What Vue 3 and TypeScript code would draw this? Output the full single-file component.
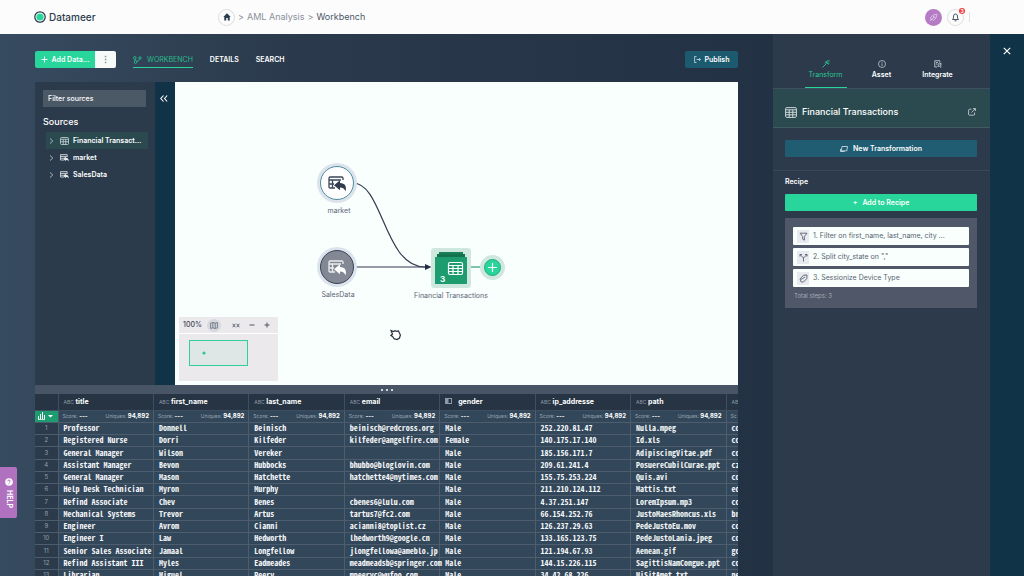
<script setup lang="ts">
import { ref } from 'vue'

interface Column { name: string; kind: 'text' | 'bool' }
interface Source { name: string; derived: boolean }
interface Step { label: string; icon: 'filter' | 'split' | 'tag' }

const filter = ref('')

const sources: Source[] = [
  { name: 'Financial Transact...', derived: true },
  { name: 'market', derived: false },
  { name: 'SalesData', derived: false },
]

const steps: Step[] = [
  { label: '1. Filter on first_name, last_name, city ...', icon: 'filter' },
  { label: '2. Split city_state on ","', icon: 'split' },
  { label: '3. Sessionize Device Type', icon: 'tag' },
]

const columns: Column[] = [
  { name: 'title', kind: 'text' },
  { name: 'first_name', kind: 'text' },
  { name: 'last_name', kind: 'text' },
  { name: 'email', kind: 'text' },
  { name: 'gender', kind: 'bool' },
  { name: 'ip_addresse', kind: 'text' },
  { name: 'path', kind: 'text' },
]

const rows: string[][] = [
  ['Professor', 'Donnell', 'Beinisch', 'beinisch@redcross.org', 'Male', '252.220.81.47', 'Nulla.mpeg', 'co'],
  ['Registered Nurse', 'Dorri', 'Kilfeder', 'kilfeder@angelfire.com', 'Female', '140.175.17.140', 'Id.xls', 'co'],
  ['General Manager', 'Wilson', 'Vereker', '', 'Male', '185.156.171.7', 'AdipiscingVitae.pdf', 'co'],
  ['Assistant Manager', 'Bevon', 'Hubbocks', 'bhubbo@bloglovin.com', 'Male', '209.61.241.4', 'PosuereCubilCurae.ppt', 'cz'],
  ['General Manager', 'Mason', 'Hatchette', 'hatchette4@nytimes.com', 'Male', '155.75.253.224', 'Quis.avi', 'co'],
  ['Help Desk Technician', 'Myron', 'Murphy', '', 'Male', '211.210.124.112', 'Mattis.txt', 'ed'],
  ['Refind Associate', 'Chev', 'Benes', 'cbenes6@lulu.com', 'Male', '4.37.251.147', 'LoremIpsum.mp3', 'co'],
  ['Mechanical Systems', 'Trevor', 'Artus', 'tartus7@fc2.com', 'Male', '66.154.252.76', 'JustoMaesRhoncus.xls', 'br'],
  ['Engineer', 'Avrom', 'Cianni', 'acianni8@toplist.cz', 'Male', '126.237.29.63', 'PedeJustoEu.mov', 'co'],
  ['Engineer I', 'Law', 'Hedworth', 'lhedworth9@google.cn', 'Male', '133.165.123.75', 'PedeJustoLania.jpeg', 'co'],
  ['Senior Sales Associate', 'Jamaal', 'Longfellow', 'jlongfellowa@ameblo.jp', 'Male', '121.194.67.93', 'Aenean.gif', 'go'],
  ['Refind Assistant III', 'Myles', 'Eadmeades', 'meadmeadsb@springer.com', 'Male', '144.15.226.115', 'SagittisNamCongue.ppt', 'co'],
  ['Librarian', 'Miguel', 'Peery', 'mpeeryc@wufoo.com', 'Male', '34.42.68.226', 'MiSitAmet.txt', 'ne'],
]
</script>

<template>
  <div class="app">
    <header class="top">
      <a class="brand" href="#">
        <svg width="12" height="12" viewBox="0 0 12 12"><circle cx="6" cy="6" r="5.2" fill="#fff" stroke="#2b3b4f" stroke-width="1.3" /><circle cx="6" cy="6" r="3.6" fill="#28d59b" /></svg>
        <span>Datameer</span>
      </a>
      <nav class="crumbs" aria-label="Breadcrumb">
        <a class="home" href="#" aria-label="Home">
          <svg width="8" height="8" viewBox="0 0 8 8"><path d="M4 0.3 0.3 4H1.3V7.6H3.2V5H4.8V7.6H6.7V4H7.7Z" fill="#2b3b4f" /></svg>
        </a>
        <span>&gt;</span><a href="#">AML Analysis</a><span>&gt;</span><a href="#" class="here">Workbench</a>
      </nav>
      <div class="account">
        <button class="avatar" aria-label="Account">
          <svg width="9" height="9" viewBox="0 0 9 9" fill="none" stroke="#e9d3ef" stroke-width="0.8"><path d="M2 6.8C.7 4.4 3 2 7.8 1.2 7.7 5 5.3 7.8 3.4 6.9M1.2 8l4-4.2M4 3l2.5 2" /></svg>
        </button>
        <button class="bell" aria-label="Notifications">
          <svg width="9" height="10" viewBox="0 0 9 10" fill="none" stroke="#3b4a5c" stroke-width="0.9"><path d="M1.500 7.500h6L6.500 6V4A2 2 0 0 0 2.500 4v2ZM3.500 8.800h2" /></svg>
          <span class="badge">3</span>
        </button>
        <i class="tick"></i>
      </div>
    </header>

    <div class="body">
      <main class="main">
        <div class="toolbar">
          <div class="split">
            <button class="add"><svg width="7" height="7" viewBox="0 0 7 7" stroke="#fff" stroke-width="0.9"><path d="M3.5.5v6M.5 3.5h6" /></svg>Add Data...</button>
            <button class="more" aria-label="More">⋮</button>
          </div>
          <nav class="tabs">
            <a href="#" class="on"><svg width="9" height="8" viewBox="0 0 9 8" fill="none" stroke="#29c693" stroke-width="0.8"><circle cx="1.8" cy="1.8" r="1.3" /><circle cx="2.5" cy="6" r="1.4" /><circle cx="7" cy="2" r="1.2" /><path d="M2 3v1.7M3.6 5.2C6 5 6 4 6.5 3" /></svg>WORKBENCH</a>
            <a href="#">DETAILS</a>
            <a href="#">SEARCH</a>
          </nav>
          <button class="publish"><svg width="7" height="7" viewBox="0 0 7 7" fill="none" stroke="#c9dde4" stroke-width="0.8"><path d="M2.5.5H.6v6h1.9M2.5 3.5h4M5 2l1.5 1.5L5 5" /></svg>Publish</button>
        </div>

        <section class="workspace">
          <aside class="sources">
            <input v-model="filter" type="text" placeholder="Filter sources" aria-label="Filter sources" />
            <h2>Sources</h2>
            <ul>
              <li v-for="s in sources" :key="s.name" :class="{ on: s.derived }">
                <button>
                  <svg width="5" height="6" viewBox="0 0 5 6" fill="none" stroke="#b4c0ca" stroke-width="0.9"><path d="M1 .5 3.8 3 1 5.5" /></svg>
                  <svg v-if="s.derived" width="9" height="8" viewBox="0 0 18 16" fill="none" stroke="#cdd6da" stroke-width="1.6"><rect x="1" y="1" width="16" height="14" rx="2" /><path d="M1 4.5h16M1 9.5h16M6.5 4.5V15M11.5 4.5V15" /></svg>
                  <svg v-else width="9" height="8" viewBox="0 0 20 17" fill="none" stroke="#e4e9ec" stroke-width="1.8"><path d="M9 13H1V1h15v5M1 5h15M1 9h7" /><path d="M7 10 13 5v3c4.500 0 7 3 6 8.500-1-2.500-3-3.500-6-3.500v2.500Z" fill="#e4e9ec" stroke="none" /></svg>
                  <span>{{ s.name }}</span>
                </button>
              </li>
            </ul>
          </aside>
          <div class="rail">
            <button aria-label="Collapse sources"><svg width="8" height="7" viewBox="0 0 8 7" fill="none" stroke="#fff" stroke-width="1.100"><path d="M3.500.5.8 3.500l2.700 3M7.200.5 4.500 3.500l2.700 3" /></svg></button>
          </div>
          <div class="canvas">
            <svg class="links" width="340" height="220" viewBox="0 0 340 220" fill="none" stroke="#33394f" stroke-width="1.200">
              <path d="M178 101C208 101 209 185 250 185H252" />
              <path d="M178 185h76" />
              <path d="M250 182l6.500 3-6.500 3Z" fill="#262c40" stroke="none" />
              <path d="M292 185h18" stroke="#2f9b77" />
            </svg>
            <div class="node market">
              <svg width="20" height="18" viewBox="0 0 20 18" fill="none" stroke="#3a4558" stroke-width="1.300"><path d="M8 14H3.200Q2 14 2 12.800V4.200Q2 3 3.200 3h11.600Q16 3 16 4.200V6M2 6h12M2 10h5M5.500 6v8" /><path d="M7 11.200 13 6.200v2.800c4.800.2 7 3 5.500 8.500-.9-2.700-2.500-4-5.500-4v2.700Z" fill="#303b4e" stroke="none" /></svg>
            </div>
            <span class="label l-market">market</span>
            <div class="node sales">
              <svg width="20" height="18" viewBox="0 0 20 18" fill="none" stroke="#eceef0" stroke-width="1.300"><path d="M8 14H3.200Q2 14 2 12.800V4.200Q2 3 3.200 3h11.600Q16 3 16 4.200V6M2 6h12M2 10h5M5.500 6v8" /><path d="M7 11.200 13 6.200v2.800c4.800.2 7 3 5.500 8.500-.9-2.700-2.500-4-5.500-4v2.700Z" fill="#fff" stroke="none" /></svg>
            </div>
            <span class="label l-sales">SalesData</span>
            <div class="stack">
              <svg width="32" height="32" viewBox="0 0 32 32"><path d="M4 0h24v3H4Z" fill="#168058" /><path d="M2 2h28v4H2Z" fill="#14734f" /><path d="M0 5h32v27H0Z" fill="#1c9c6f" /><g fill="none" stroke="#fff" stroke-width="1.200"><rect x="13.500" y="10.500" width="14" height="12" rx="1.500" /><path d="M13.500 13.500h14M13.500 16.500h14M13.500 19.500h14M18 13.500v9M23 13.500v9" /></g></svg>
              <b>3</b>
            </div>
            <span class="label l-fin">Financial Transactions</span>
            <button class="plus" aria-label="Add step"><svg width="11" height="11" viewBox="0 0 11 11" stroke="#fff" stroke-width="1.200"><path d="M5.500 1v9M1 5.500h9" /></svg></button>
            <svg class="cursor" width="12" height="12" viewBox="0 0 12 12" fill="#fff" stroke="#2a2f3e" stroke-width="1.200"><path d="M1 1.500 3.500 2.500 5 1.700l1.500.6 2-.3.900 2L10.400 6 9.500 9l-2.500 1.500-3-.8L2.600 7.500.9 6.500 2.500 5Z" /></svg>
            <div class="minimap">
              <div class="zoombar">
                <span>100%</span>
                <button class="map" aria-label="Toggle map"><svg width="8" height="7" viewBox="0 0 8 7" fill="none" stroke="#626b78" stroke-width="0.800"><path d="M.6 1.200 2.800.5 5.200 1.200 7.400.5v5.300l-2.200.7-2.400-.7-2.200.7ZM2.800.5v5.300M5.200 1.200v5.300" /></svg></button>
                <button aria-label="Fit"><svg width="8" height="5" viewBox="0 0 8 5" fill="none" stroke="#4d5665" stroke-width="0.900"><path d="M.7.8 2 2.500.7 4.200M3.300.8 2 2.500l1.300 1.700M4.700.8 6 2.500 4.700 4.200M7.300.8 6 2.500l1.300 1.700" /></svg></button>
                <button aria-label="Zoom out"><svg width="6" height="6" viewBox="0 0 6 6" stroke="#4d5665"><path d="M.5 3h5" /></svg></button>
                <button aria-label="Zoom in"><svg width="6" height="6" viewBox="0 0 6 6" stroke="#4d5665"><path d="M.5 3h5M3 .5v5" /></svg></button>
              </div>
              <div class="overview"><svg width="59" height="26" viewBox="0 0 59 26"><rect x=".5" y=".5" width="58" height="25" fill="#dfe7e6" stroke="#2fd09a" /><circle cx="15" cy="13" r="1.600" fill="#2fc792" /></svg></div>
            </div>
          </div>
        </section>

        <div class="divider"><i></i><i></i><i></i></div>

        <section class="grid">
          <table>
            <colgroup><col class="c-num" /><col v-for="c in columns" :key="c.name" /><col class="c-end" /></colgroup>
            <thead>
              <tr class="names">
                <th></th>
                <th v-for="c in columns" :key="c.name" scope="col"><small v-if="c.kind === 'text'">ABC</small><svg v-else width="7" height="6" viewBox="0 0 7 6"><rect x=".5" y=".5" width="6" height="5" fill="none" stroke="#8d99a5" /><path d="M1 1h2.500v4H1Z" fill="#8d99a5" /></svg>{{ c.name }}</th>
                <th><small>ABC</small></th>
              </tr>
              <tr class="stats">
                <td class="chart"><button aria-label="Column statistics"><svg width="16" height="8" viewBox="0 0 16 8" fill="#fff"><path d="M0 4h1v3H0ZM2 2h1v5H2ZM4 0h1v7H4ZM6 3h1v4H6ZM0 7h7v.7H0ZM10 3h5l-2.500 2.500Z" /></svg></button></td>
                <td v-for="c in columns" :key="c.name"><div><span>Score: <b>---</b></span><span>Uniques: <b>94,892</b></span></div></td>
                <td>Sc</td>
              </tr>
            </thead>
            <tbody>
              <tr v-for="(r, i) in rows" :key="i">
                <th scope="row">{{ i + 1 }}</th>
                <td v-for="(v, j) in r" :key="j">{{ v }}</td>
              </tr>
            </tbody>
          </table>
        </section>
      </main>

      <aside class="inspector">
        <nav class="modes">
          <a href="#" class="on"><svg width="8" height="8" viewBox="0 0 8 8" fill="none" stroke="#29c693" stroke-width="0.900"><path d="M.5 7.500 4.500 3.500M3.500 1.500l3 3M3 3.500 5 1l2.500-.3M5 3h2.500" /></svg>Transform</a>
          <a href="#"><svg width="8" height="8" viewBox="0 0 8 8" fill="none" stroke="#d4dae0" stroke-width="0.700"><circle cx="4" cy="4" r="3.500" /><path d="M4 3.300V6M4 1.800v.9" /></svg>Asset</a>
          <a href="#"><svg width="8" height="8" viewBox="0 0 8 8" fill="none" stroke="#d4dae0" stroke-width="0.800"><path d="M3 7H.8V.7h5V2.500M2 2.500h2M2 4h1" /><circle cx="5.500" cy="4.800" r="1.500" /><path d="M3.500 7 4.500 6M5.500 4.800l2-2M6 7h1.500" /></svg>Integrate</a>
        </nav>
        <div class="title">
          <svg width="12" height="11" viewBox="0 0 12 11" fill="none" stroke="#dce3e4" stroke-width="0.900"><rect x=".6" y=".6" width="10.800" height="9.800" rx="1.200" /><path d="M.6 2.800h10.800M.6 5.300h10.800M.6 7.800h10.800M4.200 2.800v7.600M7.800 2.800v7.600" /></svg>
          <h1>Financial Transactions</h1>
          <a href="#" aria-label="Open"><svg width="8" height="8" viewBox="0 0 8 8" fill="none" stroke="#d4dcdc" stroke-width="0.800"><path d="M3.500 1.200H1.600Q.6 1.200.6 2.200v4Q.6 7.200 1.600 7.200h4q1 0 1-1V4.500M5 .6h2.400V3M7.400.6 3.500 4.500" /></svg></a>
        </div>
        <div class="create">
          <button class="transform"><svg width="8" height="6" viewBox="0 0 8 6" fill="none" stroke="#dbe7ec" stroke-width="0.800"><path d="M2 .5h5.500L6.800 4.800H1.200ZM.5 3v2.500h4" /></svg>New Transformation</button>
        </div>
        <div class="recipe">
          <h3>Recipe</h3>
          <button class="addstep"><span>+</span>Add to Recipe</button>
          <div class="steps">
            <ol>
              <li v-for="s in steps" :key="s.label">
                <button>
                  <i><svg width="9" height="9" viewBox="0 0 9 9" fill="none" stroke="#596173" stroke-width="0.900">
                    <path v-if="s.icon === 'filter'" d="M1 1.200h7L5.400 4.500v3.700L3.600 7V4.500Z" />
                    <path v-else-if="s.icon === 'split'" d="M4.500 8.500V5L1 1.500M4.500 5 8 1.500M1 3.500v-2h2M8 3.500v-2H6" />
                    <path v-else d="M1 5 4.500 1.200 8 1l-.2 3.500L4.500 8H2.200ZM2 5.500 6 3" />
                  </svg></i>{{ s.label }}
                </button>
              </li>
            </ol>
            <p>Total steps: 3</p>
          </div>
        </div>
      </aside>

      <div class="edge">
        <button aria-label="Close panel"><svg width="8" height="8" viewBox="0 0 8 8" stroke="#fff" stroke-width="1.200"><path d="M.8.8l6.400 6.400M7.200.8.8 7.200" /></svg></button>
      </div>
    </div>

    <button class="help"><svg width="8" height="8" viewBox="0 0 8 8"><circle cx="4" cy="4" r="3.800" fill="#fff" /><path d="M2.800 3.300Q2.800 2 4 2t1.200 1.100Q5.200 3.900 4 4.400M4 5.300v.9" stroke="#a76bb6" fill="none" stroke-width=".9" /></svg><span>HELP</span></button>
  </div>
</template>

<style>
html, body { margin: 0; }
body { overflow: hidden; }
</style>

<style scoped>
* { box-sizing: border-box; }
.app { display: flex; flex-direction: column; height: 100vh; font: 500 7px/10px Inter, "Noto Sans", sans-serif; color: #fff; background: #2b3a4c; }
button { font: inherit; color: inherit; border: 0; padding: 0; background: none; display: flex; align-items: center; cursor: pointer; }
a { color: inherit; text-decoration: none; }
h1, h2, h3, p, ul, ol { margin: 0; padding: 0; list-style: none; }
svg { display: block; flex: none; }

.top { flex: none; height: 34px; display: grid; grid-template-columns: 184px 1fr auto; align-items: center; padding: 0 54px 0 34px; background: #fcfcfc; color: #5c6675; }
.brand { display: flex; align-items: center; gap: 3px; font-size: 10px; font-weight: 500; color: #2b3b4f; }
.crumbs { display: flex; align-items: center; gap: 3px; font-size: 9px; line-height: 12px; font-weight: 400; color: #8a8f9b; }
.crumbs .here { color: #4c5666; }
.home { width: 17px; height: 17px; border: 1px solid #dedee2; border-radius: 50%; display: flex; align-items: center; justify-content: center; }
.account { display: flex; align-items: center; gap: 5px; }
.avatar, .bell { width: 17px; height: 17px; border-radius: 50%; justify-content: center; }
.avatar { background: #b57bc4; }
.bell { position: relative; border: 1px solid #dedee2; }
.badge { position: absolute; top: -2px; right: -2px; width: 6px; height: 6px; border-radius: 50%; background: #f23b3b; color: #fff; font-size: 5px; line-height: 6px; font-weight: 700; text-align: center; }
.tick { width: 1px; height: 10px; background: #e6dbe9; }

.body { flex: 1; min-height: 0; display: grid; grid-template: minmax(0, 1fr) / minmax(0, 1fr) 217px 34px; background: linear-gradient(90deg, #374b60 0, #2a394b 30%, #233144 76%); }
.main { display: grid; grid-template-rows: 48px minmax(0, 303fr) 9px minmax(0, 182fr); padding: 0 35px; min-width: 0; }

.toolbar { display: flex; align-items: center; padding-top: 3px; }
.split { display: flex; height: 17px; border-radius: 2px; overflow: hidden; font-weight: 600; }
.add { width: 60px; justify-content: center; gap: 4px; background: #28d59b; }
.more { width: 21px; justify-content: center; background: #f6fbf9; color: #7b8794; font-size: 9px; }
.tabs { display: flex; gap: 17px; margin-left: 17px; font-weight: 600; }
.tabs a { display: flex; align-items: center; gap: 5px; height: 16px; padding-top: 2px; border-bottom: 1px solid transparent; }
.tabs .on { color: #29b98b; border-color: #28d59b; font-weight: 400; }
.publish { margin-left: auto; width: 53px; height: 17px; justify-content: center; gap: 4px; border-radius: 2px; background: #1c5a6f; font-weight: 600; }

.workspace { display: grid; grid-template: minmax(0, 1fr) / 120px 20px minmax(0, 1fr); min-height: 0; }
.sources { background: #2c3b4c; padding: 8px 7px 0 8px; }
.sources input { display: block; width: 103px; height: 17px; padding: 0 5px; border: 0; background: #4b5866; color: #fff; font: inherit; }
.sources input::placeholder { color: #fff; opacity: 1; }
.sources h2 { margin: 9px 0 4px; font-size: 9px; line-height: 12px; font-weight: 500; }
.sources li { height: 17px; margin-left: 3px; }
.sources li.on { background: #2a4a50; }
.sources li button { height: 17px; padding-left: 3px; font-weight: 600; }
.sources li svg + svg { margin: 0 4px 0 6px; }
.rail { background: #113348; }
.rail button { width: 18px; height: 32px; justify-content: center; }
.canvas { position: relative; overflow: hidden; background: #f9fffd; }

.links { position: absolute; left: 0; top: 0; }
.node { position: absolute; width: 34px; height: 34px; border-radius: 50%; display: flex; align-items: center; justify-content: center; box-shadow: 0 0 0 3px #dbe4ec; }
.market { left: 145px; top: 84px; background: #fff; border: 1px solid #4d8ca0; }
.sales { left: 145px; top: 168px; background: #828894; border: 1px solid #3c4356; }
.label { position: absolute; transform: translateX(-50%); font-weight: 400; color: #5b6373; white-space: nowrap; }
.l-market { left: 164px; top: 124px; }
.l-sales { left: 163px; top: 208px; }
.l-fin { left: 276px; top: 209px; }
.stack { position: absolute; left: 260px; top: 170px; box-shadow: 0 0 0 4px #cfe8df; border-radius: 1px; background: #cfe8df; }
.stack b { position: absolute; left: 5px; bottom: 0; font-size: 8px; font-weight: 700; }
.plus { position: absolute; left: 309px; top: 177px; width: 17px; height: 17px; justify-content: center; border-radius: 50%; background: #28d59b; border: 1px solid #22a97c; box-shadow: 0 0 0 4px #cfe8df; }
.cursor { position: absolute; left: 215px; top: 247px; }
.minimap { position: absolute; left: 4px; bottom: 4px; width: 99px; background: #ebe9ec; color: #3b4556; }
.zoombar { display: flex; align-items: center; height: 17px; padding-left: 4px; gap: 9px; border-bottom: 1px solid #fff; }
.zoombar .map { width: 14px; height: 13px; margin: 0 2px 0 -4px; border-radius: 50%; justify-content: center; background: #d5d8de; }
.overview { padding: 6px 10px 15px; }

.divider { display: flex; align-items: center; justify-content: center; gap: 3px; background: #475566; }
.divider i { width: 2px; height: 2px; border-radius: 50%; background: #fff; }

.grid { overflow: hidden; background: #33475a; }
table { width: 100%; table-layout: fixed; border-collapse: collapse; }
.c-num { width: 23px; }
.c-end { width: 12px; }
th, td { padding: 0 0 0 5px; white-space: nowrap; text-align: left; border: 1px solid #4d5d6d; border-width: 0 1px 1px 0; }
th:last-child, td:last-child { border-right: 0; }
.names th { height: 16px; background: #263443; font-weight: 700; border-color: #3f4f5f; }
.names small, .names svg { display: inline-block; width: 12px; font-size: 5px; font-weight: 400; color: #8d99a5; }
.names svg { width: 7px; margin-right: 6px; }
.stats td { height: 12px; padding: 0 4px; font-size: 5px; line-height: 8px; font-weight: 400; color: #9aa5b0; }
.stats div { display: flex; justify-content: space-between; }
.stats b { color: #fff; font-size: 6px; font-weight: 700; }
.stats .chart { padding: 0; background: #1c9c6f; }
.chart button { width: 100%; justify-content: center; }
tbody tr { height: 12px; }
tbody tr:nth-child(4n + 3) { height: 13px; }
tbody td { font: 700 8px/10px "Noto Sans Mono CJK SC", "DejaVu Sans Mono", monospace; color: #f3f6f8; }
tbody th { padding: 0; text-align: center; font-size: 6px; line-height: 8px; font-weight: 400; color: #93a0ac; background: #2b3b4b; }

.inspector { background: #2c3a4b; min-width: 0; }
.modes { display: flex; justify-content: center; gap: 14px; height: 55px; border-bottom: 1px solid #3e4f60; font-weight: 600; }
.modes a { width: 42px; padding-top: 26px; display: flex; flex-direction: column; align-items: center; gap: 2px; }
.modes .on { color: #29c693; border-bottom: 1px solid #28d59b; font-weight: 400; }
.title { display: flex; align-items: center; gap: 5px; height: 39px; padding: 8px 14px 0 12px; background: #2a4a50; border-bottom: 1px solid #425a62; }
.title h1 { flex: 1; font-size: 9px; line-height: 12px; font-weight: 500; }
.create { padding: 12px 13px 13px 12px; border-bottom: 1px solid #38495a; }
.create button, .addstep { width: 100%; height: 17px; justify-content: center; border-radius: 1px; gap: 5px; font-weight: 600; }
.transform { background: #205c72; }
.recipe { padding: 6px 13px 0 12px; }
.recipe h3 { margin-bottom: 7px; font-size: 7px; line-height: 10px; font-weight: 600; }
.addstep { background: #28d59b; }
.steps { margin-top: 7px; padding: 9px 8px 8px; background: #505768; }
.steps ol { display: grid; gap: 3px; }
.steps li button { width: 100%; height: 18px; padding-left: 4px; gap: 4px; border-radius: 1px; background: #f8fffc; color: #5a6272; font-weight: 400; }
.steps i { width: 12px; height: 13px; display: grid; place-items: center; background: #e8eaf0; }
.steps p { margin-top: 5px; padding-left: 1px; font-size: 6px; line-height: 8px; font-weight: 400; color: #a3a9b5; }

.edge { background: #113348; }
.edge button { width: 34px; height: 34px; justify-content: center; }

.help { position: fixed; left: 0; top: 467px; width: 17px; height: 51px; flex-direction: column; justify-content: center; gap: 4px; border-radius: 0 2px 2px 0; background: #b072be; font-weight: 700; }
.help span { writing-mode: vertical-rl; }
</style>
